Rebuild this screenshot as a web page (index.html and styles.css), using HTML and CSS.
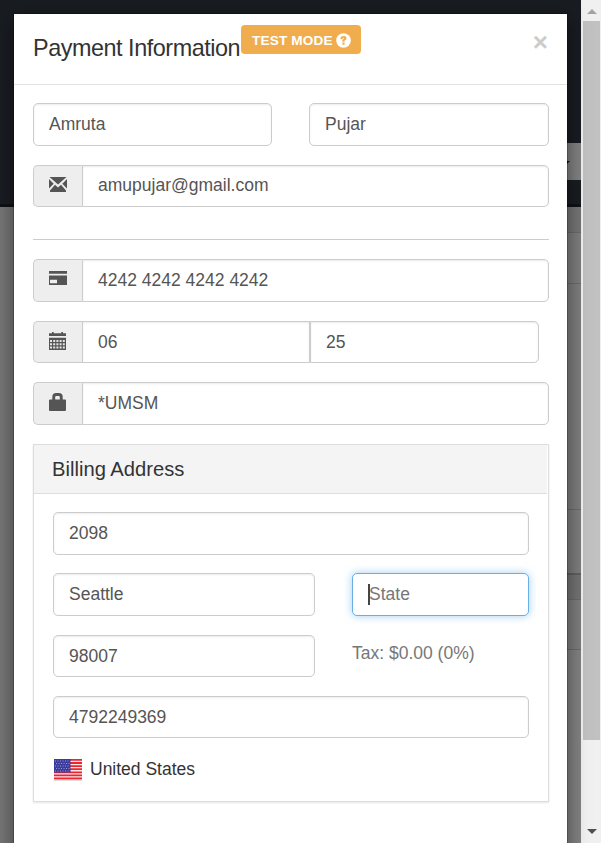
FILE: index.html
```
<!DOCTYPE html>
<html lang="en">
<head>
<meta charset="utf-8">
<title>Payment Information</title>
<link rel="stylesheet" href="styles.css">
</head>
<body>
<div class="window">
  <div class="page">
    <div class="navbar"><div class="toggle"><i class="caret"></i></div></div>
    <div class="strip title-strip"></div>
    <div class="strip row-a"></div>
    <div class="strip row-b"></div>
    <div class="strip row-c"></div>
    <div class="strip head-strip"></div>
    <div class="strip row-d"></div>
    <div class="strip rest"></div>
  </div>
  <div class="scrollbar"><i class="up"></i><div class="thumb"></div><i class="down"></i></div>
  <div class="modal">
    <header class="modal-header">
      <h1>Payment Information</h1>
      <span class="label"><span>TEST MODE</span>
        <svg width="15" height="15" viewBox="0 0 15 15"><circle cx="7.5" cy="7.5" r="7.3" fill="#fff"/><path d="M4.4 6V5.2Q4.8 2.9 7.6 2.9T10.5 5.3Q10.5 6.6 8.6 7.6V8.7H6.4V6.8Q8.1 6.2 8.1 5.3Q8 4.7 7.4 4.8Q6.8 4.9 6.8 6ZM6.4 9.6H8.6V11.7H6.4Z" fill="#f0ad4e"/></svg>
      </span>
      <span class="close">×</span>
    </header>
    <main class="modal-body">
      <div class="row names">
        <div class="field">Amruta</div>
        <div class="field">Pujar</div>
      </div>
      <div class="row group email">
        <div class="addon"><svg width="18" height="15" viewBox="0 0 18 15"><path d="M.5 0H17.5L9 7.6ZM0 2 4.7 6.7 0 11.5ZM18 2V11.5L13.3 6.7ZM6 7.7 9 10.5 12 7.7 17 13.6V15H1V13.6Z" fill="#555"/></svg></div>
        <div class="field">amupujar@gmail.com</div>
      </div>
      <hr>
      <div class="row group">
        <div class="addon card"><svg width="18" height="14" viewBox="0 0 18 14"><path d="M0 0H18V2.7H0ZM0 4.6H18V14H0ZM1 8.7V12.3H8V8.7Z" fill="#555" fill-rule="evenodd"/></svg></div>
        <div class="field">4242 4242 4242 4242</div>
      </div>
      <div class="row group expiry">
        <div class="addon"><svg width="17" height="18" viewBox="0 0 17 18"><path d="M0 1.2H3V0H4.7V1.2H12.3V0H14V1.2H17V4H0ZM0 5.7H17V18H0Z" fill="#555"/><path d="M1 8h2v2H1zM4.2 8h2v2h-2zM7.4 8h2v2h-2zM10.6 8h2v2h-2zM13.8 8h2v2h-2zM1 11.2h2v2H1zM4.2 11.2h2v2h-2zM7.4 11.2h2v2h-2zM10.6 11.2h2v2h-2zM13.8 11.2h2v2h-2zM1 14.4h2v2H1zM4.2 14.4h2v2h-2zM7.4 14.4h2v2h-2zM10.6 14.4h2v2h-2zM13.8 14.4h2v2h-2z" fill="#e4e4e4"/></svg></div>
        <div class="field month">06</div>
        <div class="field year">25</div>
      </div>
      <div class="row group">
        <div class="addon"><svg width="17" height="18" viewBox="0 0 17 18"><path d="M1 6.5H3.3V3.5Q3.5 0 7 0H10Q13.5 0 13.7 3.5V6.5H16Q17 6.7 17 7.5V17Q16.8 18 16 18H1Q0 17.8 0 17V7.5Q.2 6.5 1 6.5ZM6.2 6.5H10.8V4Q10.8 3 9.8 3H7.2Q6.2 3 6.2 4Z" fill="#555" fill-rule="evenodd"/></svg></div>
        <div class="field">*UMSM</div>
      </div>
      <section class="panel">
        <h2>Billing Address</h2>
        <div class="panel-body">
          <div class="row"><div class="field">2098</div></div>
          <div class="row split">
            <div class="field">Seattle</div>
            <div class="field focused"><i class="cursor"></i>State</div>
          </div>
          <div class="row split">
            <div class="field">98007</div>
            <div class="tax">Tax: $0.00 (0%)</div>
          </div>
          <div class="row"><div class="field">4792249369</div></div>
          <div class="country">
            <svg width="28" height="22" viewBox="0 0 28 22"><path fill="#bbb" d="M0 20H28V21.5H0z"/><path fill="#f8e8e8" d="M0 0H28V20.5H0z"/><path d="M0 .9H28M0 4H28M0 7.1H28M0 10.2H28M0 13.3H28M0 16.4H28M0 19.4H28" stroke="#ed2530" stroke-width="1.8"/><path fill="#3b3b9d" d="M0 0H16.5V13.5H0z"/><path d="M1 2H16M2 4.5H16M1 7H16M2 9.5H16M1 12H16" stroke="#9a9ad0" stroke-width="1" stroke-dasharray="1 1.5"/></svg>
            <span>United States</span>
          </div>
        </div>
      </section>
    </main>
  </div>
</div>
</body>
</html>
```
FILE: styles.css
```
* { box-sizing: border-box; }
body { margin: 0; font: 17.5px/25px "Liberation Sans", Arial, sans-serif; color: #333; }
.window { position: relative; display: flex; width: 601px; height: 843px; overflow: hidden; }
.page { flex: 1; display: flex; flex-direction: column; background: #767676; }
.navbar { height: 207px; padding-top: 143px; background: #191c21; border-bottom: 3px solid #101114; }
.toggle { height: 37px; margin-left: 530px; padding: 18px 0 0 32px; background: #818181; }
.caret { display: block; width: 0; border: 4px solid transparent; border-top-color: #111; }
.strip { margin-left: 300px; border-bottom: 1px solid #6a6a6a; background: #7d7d7d; }
.title-strip { height: 26px; background: #757575; }
.row-a { height: 51px; }
.row-b { height: 226px; }
.row-c { height: 65px; border-bottom: 2px solid #606060; }
.head-strip { height: 25px; background: #737373; }
.row-d { height: 50px; }
.rest { flex: 1; border: 0; background: #828282; }
.scrollbar { width: 20px; display: flex; flex-direction: column; align-items: center; padding: 9px 1px 9px 2px; background: #f0f0f0; }
.up, .down { width: 0; border: 5px solid transparent; }
.up { border-top: 0; border-bottom-color: #a3a3a3; }
.down { border-bottom: 0; border-top-color: #505050; margin-top: auto; }
.thumb { width: 17px; height: 719px; margin-top: 7px; background: #c1c1c1; }
.modal { position: absolute; left: 14px; top: 14px; width: 553px; height: 860px; background: #fff; box-shadow: 0 0 0 1px rgba(0,0,0,.2), 0 5px 18px rgba(0,0,0,.5); }
.modal-header { height: 71px; display: flex; align-items: flex-start; padding: 11px 19px 0; border-bottom: 1px solid #e2e2e2; }
h1 { width: 208px; margin: 7px 0 0; font-size: 23.4px; line-height: 32px; font-weight: 400; letter-spacing: -.46px; white-space: nowrap; }
.label { display: flex; align-items: center; gap: 3px; width: 120px; height: 29px; padding-left: 11px; padding-top: 1px; border-radius: 4px; background: #f0ad4e; color: #fff; font-size: 13.6px; letter-spacing: .15px; font-weight: 700; white-space: nowrap; }
.close { margin-left: auto; padding-top: 5px; color: #ccc; font-size: 26px; font-weight: 700; }
.modal-body { padding: 18px 18px 0 19px; }
.row { display: flex; height: 42.5px; margin-bottom: 19px; }
.names { gap: 37px; }
.names .field:first-child { flex: 0 0 239px; }
.field { flex: 1; min-width: 0; padding: 8px 15px; border: 1px solid #ccc; border-radius: 5px; background: #fff; color: #555; box-shadow: inset 0 1px 2px rgba(0,0,0,.08); white-space: nowrap; }
.addon { width: 49px; display: flex; align-items: center; justify-content: center; padding: 0 1px 2px 0; border: 1px solid #ccc; border-right: 0; border-radius: 5px 0 0 5px; background: #eee; }
.card { padding: 0 0 4px; }
.group .field { border-radius: 0 5px 5px 0; }
.email .field { padding-top: 7px; }
.expiry { padding-right: 10px; }
.expiry .month { flex: 0 0 228px; border-radius: 0; }
hr { height: 1px; margin: 32px 0 19px; border: 0; background: #ccc; }
.panel { height: 358px; border: 1px solid #ddd; box-shadow: 0 1px 2px rgba(0,0,0,.1); }
h2 { margin: 0 1px 0 0; height: 49px; padding: 12px 18px; border-bottom: 1px solid #ddd; background: #f4f4f4; font-size: 20.2px; line-height: 25px; font-weight: 400; }
.panel-body { padding: 18.5px 19px 0; }
.panel .row { margin-bottom: 18.8px; }
.split { gap: 37px; }
.split .field:first-child { flex: 0 0 262px; }
.focused { border-color: #66afe9; color: #777; box-shadow: 0 0 8px rgba(102,175,233,.6); display: flex; }
.cursor { width: 2px; height: 21px; margin: 2px -1px 0 0; background: #444; flex: none; }
.tax { padding-top: 6px; color: #777; }
.country { display: flex; align-items: center; gap: 8px; padding-left: 1px; }
```
